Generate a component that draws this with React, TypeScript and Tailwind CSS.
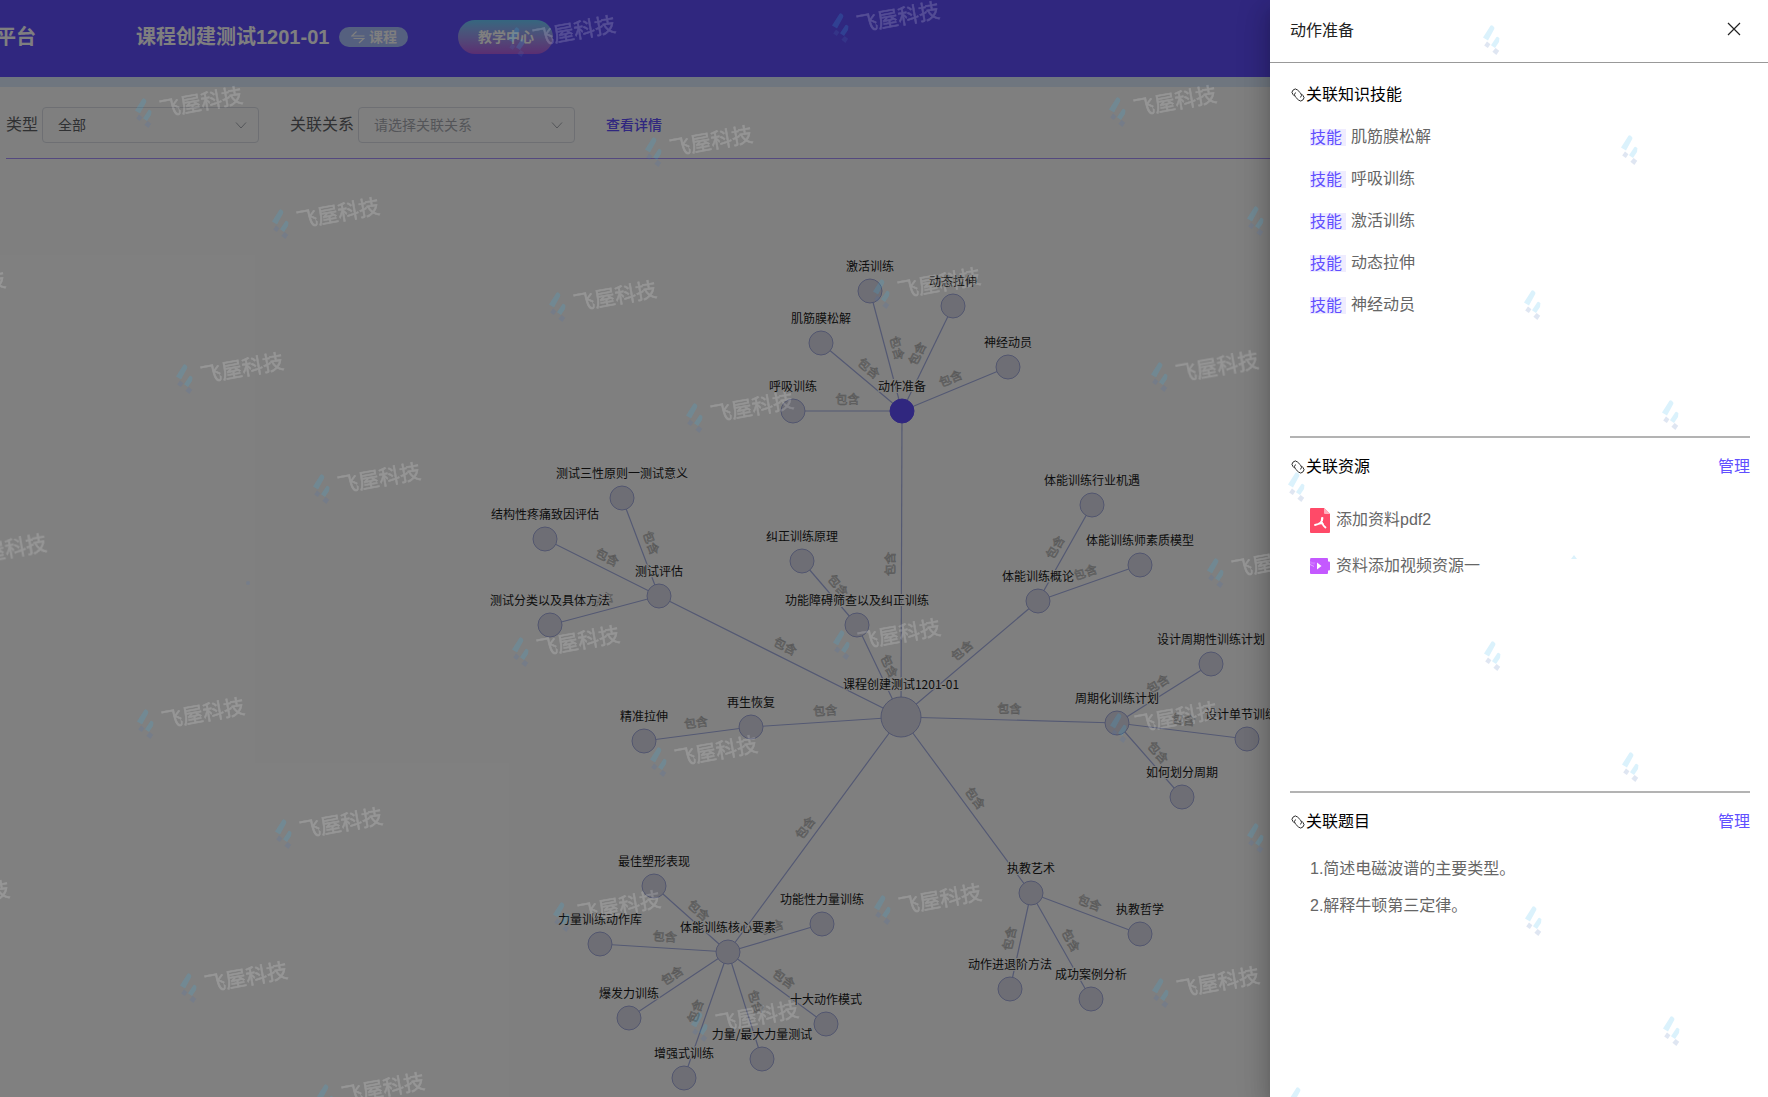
import type { ReactNode } from 'react';

type GraphNode = { id: string; x: number; y: number; parent?: string; root?: boolean; active?: boolean };

const ROOT = '课程创建测试1201-01';

const NODES: GraphNode[] = [
  { id: ROOT, x: 901, y: 717, root: true },
  { id: '动作准备', x: 902, y: 411, parent: ROOT, active: true },
  { id: '激活训练', x: 870, y: 291, parent: '动作准备' },
  { id: '动态拉伸', x: 953, y: 306, parent: '动作准备' },
  { id: '肌筋膜松解', x: 821, y: 343, parent: '动作准备' },
  { id: '神经动员', x: 1008, y: 367, parent: '动作准备' },
  { id: '呼吸训练', x: 793, y: 411, parent: '动作准备' },
  { id: '测试评估', x: 659, y: 596, parent: ROOT },
  { id: '测试三性原则一测试意义', x: 622, y: 498, parent: '测试评估' },
  { id: '结构性疼痛致因评估', x: 545, y: 539, parent: '测试评估' },
  { id: '测试分类以及具体方法', x: 550, y: 625, parent: '测试评估' },
  { id: '功能障碍筛查以及纠正训练', x: 857, y: 625, parent: ROOT },
  { id: '纠正训练原理', x: 802, y: 561, parent: '功能障碍筛查以及纠正训练' },
  { id: '再生恢复', x: 751, y: 727, parent: ROOT },
  { id: '精准拉伸', x: 644, y: 741, parent: '再生恢复' },
  { id: '体能训练概论', x: 1038, y: 601, parent: ROOT },
  { id: '体能训练行业机遇', x: 1092, y: 505, parent: '体能训练概论' },
  { id: '体能训练师素质模型', x: 1140, y: 565, parent: '体能训练概论' },
  { id: '周期化训练计划', x: 1117, y: 723, parent: ROOT },
  { id: '设计周期性训练计划', x: 1211, y: 664, parent: '周期化训练计划' },
  { id: '设计单节训练课', x: 1247, y: 739, parent: '周期化训练计划' },
  { id: '如何划分周期', x: 1182, y: 797, parent: '周期化训练计划' },
  { id: '体能训练核心要素', x: 728, y: 952, parent: ROOT },
  { id: '最佳塑形表现', x: 654, y: 886, parent: '体能训练核心要素' },
  { id: '力量训练动作库', x: 600, y: 944, parent: '体能训练核心要素' },
  { id: '功能性力量训练', x: 822, y: 924, parent: '体能训练核心要素' },
  { id: '爆发力训练', x: 629, y: 1018, parent: '体能训练核心要素' },
  { id: '十大动作模式', x: 826, y: 1024, parent: '体能训练核心要素' },
  { id: '力量/最大力量测试', x: 762, y: 1059, parent: '体能训练核心要素' },
  { id: '增强式训练', x: 684, y: 1078, parent: '体能训练核心要素' },
  { id: '执教艺术', x: 1031, y: 893, parent: ROOT },
  { id: '执教哲学', x: 1140, y: 934, parent: '执教艺术' },
  { id: '动作进退阶方法', x: 1010, y: 989, parent: '执教艺术' },
  { id: '成功案例分析', x: 1091, y: 999, parent: '执教艺术' },
];

// the canvas starts right below the filter bar
const GRAPH_TOP = 159;

const MARKS: [number, number][] = [
  [508, 27], [832, 13], [135, 98], [645, 137], [1109, 97], [272, 209], [549, 292], [873, 279],
  [-102, 282], [176, 364], [686, 403], [1151, 362], [313, 474], [-61, 545], [1207, 558],
  [512, 637], [833, 630], [137, 709], [650, 747], [1110, 713], [275, 819], [-98, 892],
  [180, 973], [553, 902], [874, 895], [691, 1012], [1152, 978], [317, 1084],
];

// the white lettering is left out on the drawer
const LOGO_ONLY_MARKS: [number, number][] = [
  [1247, 206], [1247, 823], [1483, 25], [1621, 135], [1524, 290], [1662, 400], [1288, 472],
  [1484, 641], [1622, 752], [1525, 906], [1663, 1016], [1289, 1087],
];

const SKILLS = ['肌筋膜松解', '呼吸训练', '激活训练', '动态拉伸', '神经动员'];
const QUESTIONS = ['1.简述电磁波谱的主要类型。', '2.解释牛顿第三定律。'];

function Graph() {
  const byId = new Map(NODES.map((n) => [n.id, n]));
  const edges = NODES.flatMap((n) => {
    const from = n.parent ? byId.get(n.parent) : undefined;
    return from ? [{ from, to: n }] : [];
  });

  return (
    <svg
      className="block h-[938px] w-full font-['Noto_Sans_CJK_SC',sans-serif] text-xs"
      role="img"
      aria-label="知识图谱"
    >
      <g transform={`translate(0 ${-GRAPH_TOP})`}>
        {edges.map(({ from, to }) => (
          <line key={to.id} x1={from.x} y1={from.y} x2={to.x} y2={to.y} stroke="#a8b2e6" strokeWidth="1.2" />
        ))}
        {edges.map(({ from, to }) => {
          const [a, b] = from.x < to.x || (from.x === to.x && from.y > to.y) ? [from, to] : [to, from];
          const angle = (Math.atan2(b.y - a.y, b.x - a.x) * 180) / Math.PI;
          return (
            <text
              key={to.id}
              transform={`translate(${(a.x + b.x) / 2} ${(a.y + b.y) / 2}) rotate(${angle})`}
              y="-7"
              textAnchor="middle"
              fill="#fff"
              stroke="#b0b0b0"
              strokeWidth="0.6"
            >
              包含
            </text>
          );
        })}
        {NODES.map((n) => (
          <circle
            key={n.id}
            cx={n.x}
            cy={n.y}
            r={n.root ? 20 : 12}
            fill={n.active ? '#614fff' : '#dcdcea'}
            stroke={n.active ? '#614fff' : '#a4acde'}
          />
        ))}
        {NODES.map((n) => (
          <text
            key={n.id}
            x={n.x}
            y={n.y - (n.root ? 28 : 20)}
            textAnchor="middle"
            fill="#1a1a1a"
            stroke="#fff"
            strokeWidth="2"
            paintOrder="stroke"
          >
            {n.id}
          </text>
        ))}
      </g>
    </svg>
  );
}

function MarkLogo() {
  return (
    <>
      <path d="M7.5 0.8Q9 -0.6 11 2Q11.8 3 11 4.5L5 15.5L0 12.5Z" fill="#36b4ee" />
      <path d="M13.5 12Q15 10.8 16.4 13.5L16 17L12 23L8 20.2Z" fill="#36b4ee" />
      <path d="M4 16.6L7.4 19.2L4.8 23L1.2 20.6Z" fill="#4a72b4" />
      <path d="M12.6 23L16.2 25.8L13.4 30L9.4 26.8Z" fill="#4a72b4" />
    </>
  );
}

function Watermark() {
  return (
    <svg
      className="pointer-events-none absolute inset-0 z-30 h-full w-full font-['Noto_Sans_CJK_SC',sans-serif] text-[21px]"
      aria-hidden="true"
    >
      <g opacity="0.18">
        {[...MARKS, ...LOGO_ONLY_MARKS].map(([x, y]) => (
          <g key={`${x},${y}`} transform={`translate(${x} ${y})`}>
            <MarkLogo />
          </g>
        ))}
        {MARKS.map(([x, y]) => (
          <text
            key={`${x},${y}`}
            transform={`translate(${x + 26} ${y + 19}) rotate(-10)`}
            fill="#fff"
            stroke="#fff"
            strokeWidth="0.5"
          >
            飞屋科技
          </text>
        ))}
        <path d="M1571 559L1574 555L1577 559Z" fill="#36b4ee" />
        <circle cx="248" cy="583" r="2" fill="#4a72b4" />
      </g>
    </svg>
  );
}

function ChevronDown() {
  return (
    <svg className="pointer-events-none absolute right-3 top-3 size-3" viewBox="0 0 12 12" fill="none" stroke="#a8abb2">
      <path d="M1 3.5L6 9L11 3.5" />
    </svg>
  );
}

function FilterSelect({ id, label, value, muted }: { id: string; label: string; value: string; muted?: boolean }) {
  return (
    <div className="flex items-center gap-1">
      <label htmlFor={id} className="text-base text-[#606266]">
        {label}
      </label>
      <div className="relative">
        <select
          id={id}
          className={`h-9 w-[217px] appearance-none rounded border border-[#dcdfe6] bg-white pl-[15px] pr-8 text-sm ${
            muted ? 'text-[#a8abb2]' : 'text-[#606266]'
          }`}
        >
          <option>{value}</option>
        </select>
        <ChevronDown />
      </div>
    </div>
  );
}

function LinkIcon() {
  return (
    <svg className="size-4" viewBox="0 0 16 16" fill="none" stroke="#222" strokeWidth="0.9">
      <g transform="rotate(45 8 8)">
        <path d="M6 11.200H4.200a3.200 3.200 0 0 1 0-6.400H8.500a3.200 3.200 0 0 1 3 3.200" />
        <path d="M10 4.800h1.800a3.200 3.200 0 0 1 0 6.400H7.500a3.200 3.200 0 0 1-3-3.200" />
      </g>
    </svg>
  );
}

function PdfIcon() {
  return (
    <svg className="h-[25px] w-5" viewBox="0 0 20 25">
      <path d="M1 0H14L20 6V24a1 1 0 0 1-1 1H1a1 1 0 0 1-1-1V1a1 1 0 0 1 1-1Z" fill="#ff4a68" />
      <path d="M14 0L20 6H15a1 1 0 0 1-1-1Z" fill="#ffb0bd" />
      <path
        d="M12.5 10C12.500 13 10 16 5 17M12 10C11 14 13 17.500 15.500 19.500M8 16C10.500 15 12.500 15.500 13 16"
        fill="none"
        stroke="#fff"
        strokeWidth="1.8"
        strokeLinecap="round"
      />
    </svg>
  );
}

function VideoIcon() {
  return (
    <svg className="h-4 w-5" viewBox="0 0 20 16">
      <path
        d="M1 0H17a1 1 0 0 1 1 1V3.500h1a1 1 0 0 1 1 1V11.500a1 1 0 0 1-1 1H18V15a1 1 0 0 1-1 1H1a1 1 0 0 1-1-1V1a1 1 0 0 1 1-1Z"
        fill="#c459ff"
      />
      <path d="M7 4.500L11.500 8L7 11.500Z" fill="#fff" />
      <path d="M0 6.500L4 8.500" stroke="#e0a8ff" />
    </svg>
  );
}

function Section({ title, manage, children }: { title: string; manage?: boolean; children: ReactNode }) {
  return (
    <section className="min-h-[355px] shrink-0 border-b-2 border-[#b3b3b3] pt-[17px] first:pt-0 last:border-b-0">
      <div className="flex items-center justify-between">
        <h3 className="flex items-center text-base text-black">
          <LinkIcon />
          {title}
        </h3>
        {manage && (
          <button type="button" className="text-base text-[#614fff]">
            管理
          </button>
        )}
      </div>
      {children}
    </section>
  );
}

function Drawer() {
  return (
    <aside className="absolute inset-y-0 right-0 z-20 flex w-[498px] flex-col bg-white shadow-[0_8px_10px_-5px_rgba(0,0,0,0.2),0_16px_24px_2px_rgba(0,0,0,0.14),0_6px_30px_5px_rgba(0,0,0,0.12)]">
      <header className="flex h-[63px] shrink-0 items-center justify-between border-b border-[#999] pl-5 pr-[18px]">
        <h2 className="text-base text-[#222]">动作准备</h2>
        <button type="button" aria-label="关闭" className="mb-1 flex size-8 items-center justify-center">
          <svg className="size-[14px]" viewBox="0 0 14 14" stroke="#222" strokeWidth="1.2">
            <path d="M1 1L13 13M13 1L1 13" />
          </svg>
        </button>
      </header>
      <div className="flex min-h-0 flex-1 flex-col overflow-hidden pl-5 pr-[18px] pt-5 text-[#666]">
        <Section title="关联知识技能">
          <ul className="mt-[9px] pl-5">
            {SKILLS.map((skill) => (
              <li key={skill} className="flex h-[42px] items-center gap-[5px]">
                <span className="w-9 bg-[#efecff] leading-[17px] text-[#614fff]">技能</span>
                {skill}
              </li>
            ))}
          </ul>
        </Section>
        <Section title="关联资源" manage>
          <ul className="mt-[18px] pl-5">
            <li className="flex h-[46px] items-center gap-1.5">
              <PdfIcon />
              添加资料pdf2
            </li>
            <li className="flex h-[46px] items-center gap-1.5">
              <VideoIcon />
              资料添加视频资源一
            </li>
          </ul>
        </Section>
        <Section title="关联题目" manage>
          <ul className="mt-4 pl-5">
            {QUESTIONS.map((q) => (
              <li key={q} className="flex h-[37px] items-center">
                {q}
              </li>
            ))}
          </ul>
        </Section>
      </div>
    </aside>
  );
}

export default function App() {
  return (
    <div className="relative h-screen overflow-hidden bg-white font-['Liberation_Sans','Noto_Sans_CJK_SC',sans-serif]">
      <header className="flex h-[77px] items-center bg-[#614fff] pb-1 text-white">
        <span className="-ml-1 w-[140px] text-xl font-bold">平台</span>
        <h1 className="text-xl font-bold">{ROOT}</h1>
        <span className="ml-[10px] flex h-5 w-[69px] items-center justify-center gap-1 rounded-full bg-[#aac0ff] text-sm font-bold">
          <svg className="size-3.5" viewBox="0 0 14 14" fill="none" stroke="currentColor" strokeWidth="1.2">
            <path d="M13.500 6H0.800L5.500 1.500M2.500 8.500H12.800L8 13" />
          </svg>
          课程
        </span>
        <button
          type="button"
          className="ml-[50px] h-[34px] w-[95px] rounded-full bg-linear-to-b from-[#6aceff] to-[#b45ce4] text-sm font-bold"
        >
          教学中心
        </button>
      </header>
      <div className="h-[10px] bg-[#dfecff]" />
      <div className="ml-1.5 flex h-[72px] items-center border-b border-[#a892ff] pt-1">
        <FilterSelect id="type" label="类型" value="全部" />
        <div className="ml-[31px]">
          <FilterSelect id="relation" label="关联关系" value="请选择关联关系" muted />
        </div>
        <a href="#detail" className="ml-[31px] text-sm font-medium text-[#614fff]">
          查看详情
        </a>
      </div>
      <Graph />
      <div className="absolute inset-0 z-10 bg-black/50" />
      <Drawer />
      <Watermark />
    </div>
  );
}
